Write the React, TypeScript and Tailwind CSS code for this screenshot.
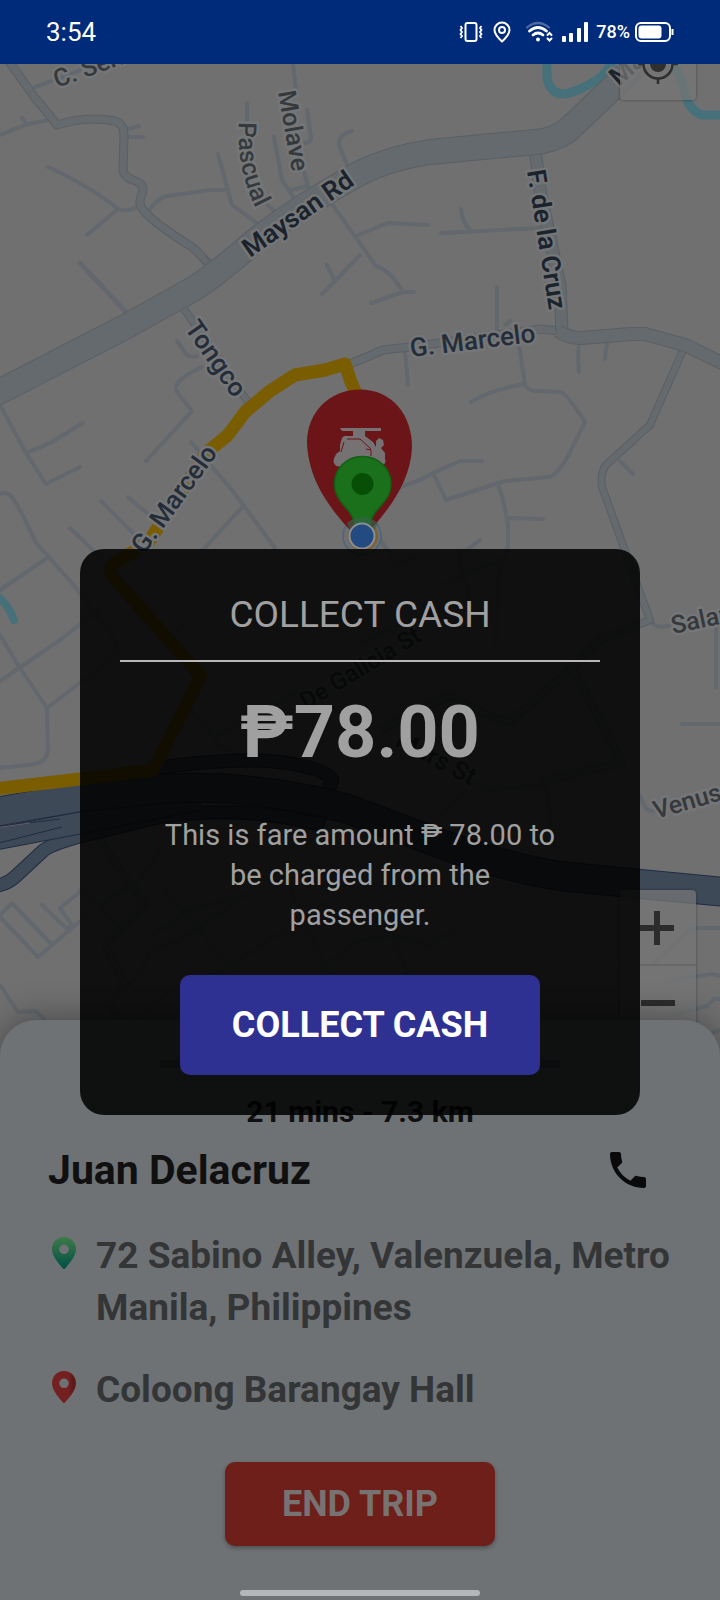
import React from "react";
import { MdPhone } from "react-icons/md";

const streets: string[] = [
  "M0 135L28 124L50 120M22 118L27 125",
  "M35 87L52 81L80 70",
  "M128 129L139 126M128 137H143",
  "M48 167Q90 186 118 209Q127 213 138 206M118 209L87 235",
  "M148 212Q158 197 168 196L210 190H224",
  "M218 154L232 205L257 223M247 103V121M266 203L276 213",
  "M274 137L282 180L294 198M290 190L308 186L303 168",
  "M293 64L296 90M307 110L311 138Q311 142 305 143",
  "M352 131Q338 135 339 145L347 165",
  "M332 204L376 266Q390 270 403 292M371 303L403 292H414",
  "M322 294L335 281L360 255M327 265L335 281M356 236L388 223L428 225",
  "M441 233L540 228M461 209Q462 222 470 230",
  "M177 341L186 354Q190 358 197 356M202 367Q170 382 177 392L192 411L146 461",
  "M0 405L26 453L46 484L80 467M26 453L50 443L83 423",
  "M191 442L232 490L275 548M244 505L200 553",
  "M128 497L155 520M101 501L140 540M70 528L100 557",
  "M0 494Q8 490 14 500Q22 512 36 543L72 583L115 640Q120 652 115 656L47 708",
  "M0 590L47 558M0 635L18 665L47 708L48 750Q47 762 35 764L0 768M0 681L60 640L107 603",
  "M405 353L408 385M497 287V330M505 325L510 321",
  "M579 342L578 354L579 372M607 343L605 359",
  "M519 345L525 384Q527 391 538 391L561 392Q565 392 585 422L567 458Q555 477 548 477L505 481L446 500L433 473",
  "M471 402Q490 390 525 384M400 487L420 480L433 473L460 461H482",
  "M497 483Q503 495 508 525V545Q506 560 495 565M508 518L543 519M620 461L633 474",
  "M650 620Q655 630 672 625M716 628V687M682 724H720M640 795Q645 813 654 811",
  "M720 928H697Q688 928 683 936L652 965M672 980L712 974L720 976M672 1015L707 1006L714 999H720M714 1032L720 1030",
  "M0 915L12 903L52 945L38 957L0 917M42 905L67 929L72 925L60 908L85 888M52 945L90 913",
  "M0 985L18 1012L36 1011L45 1020M380 540L398 564L420 555",
  "M80 890L100 905L140 880L160 850M100 905L115 925M165 890L230 966L330 900M150 937L190 910L245 895",
  "M230 966L190 985L170 990L140 1018M110 1000L140 975L150 950L180 940L250 892",
  "M290 890L325 965L360 940L395 935L430 946L460 925M325 965L350 1000M390 930L408 975",
  "M440 585L500 560L495 645M360 643L425 615L470 600L460 560M190 710L220 745Q235 758 260 754M218 735L300 690",
  "M175 635L185 620M540 785L490 790L470 780M545 780L555 850M440 817L465 790M480 540L460 555",
];

type LabelProps = { x: number; y: number; r: number; children: string; size?: number; strong?: boolean; minor?: boolean };

function Label({ x, y, r, children, size = 25, strong, minor }: LabelProps) {
  return (
    <text
      transform={`translate(${x} ${y}) rotate(${r})`}
      fontFamily="Roboto, sans-serif"
      fontSize={size}
      fontWeight={strong ? 600 : 500}
      fill={minor ? "#36393c" : strong ? "#1b232d" : "#242d38"}
      stroke="#747678"
      strokeWidth="5"
      strokeLinejoin="round"
      paintOrder="stroke"
    >
      {children}
    </text>
  );
}

function Cased({ d, w, fill = "#646a6e", edge = "#5a5f64" }: { d: string; w: number; fill?: string; edge?: string }) {
  return (
    <g fill="none" strokeLinejoin="round">
      <path d={d} stroke={edge} strokeWidth={w} />
      <path d={d} stroke={fill} strokeWidth={w - 2} />
    </g>
  );
}

function CityMap() {
  return (
    <svg
      className="absolute inset-0 h-full w-full bg-[#707070]"
      viewBox="0 64 720 1536"
      preserveAspectRatio="xMidYMin slice"
      role="img"
      aria-label="Trip route map"
    >
      <g fill="none" stroke="#62686d" strokeWidth="4" strokeLinecap="round" strokeLinejoin="round">
        {streets.map((d) => (
          <path key={d} d={d} />
        ))}
        <path d="M80 263L127 313" strokeWidth="5" />
      </g>
      <g fill="none" stroke="#46707a" strokeWidth="9" strokeLinejoin="round">
        <path d="M547 60V78Q550 93 562 94Q572 94 590 84Q604 78 613 60" />
        <path d="M674 66Q684 82 686 97Q690 111 702 115H722" />
        <path d="M-3 596Q8 604 14 620" strokeLinecap="round" strokeWidth="8" />
      </g>
      <Cased d="M8 60L35 98Q48 113 57 125L72 121Q95 117 115 121Q124 124 124 135L123 170Q124 177 133 180Q146 184 142 194Q137 204 144 211Q155 224 192 247Q203 256 213 270" w={9} />
      <Cased d="M182 306L248 402M203 258L213 270" w={8} />
      <Cased d="M350 364L383 350L410 347L540 329L560 331" w={9} />
      <Cased d="M535 148L540 190L560 285L562 332" w={13} />
      <Cased d="M684 348L650 425L606 465Q600 473 602 487L650 620L600 640L572 668L510 722Q490 718 450 695L380 730M572 668L622 762L540 782" w={8} />
      <Cased d="M558 331Q568 338 582 338L630 334L645 334L685 345L724 364" w={14} />
      <Cased d="M-5 394L125 327L195 288Q214 276 250 245Q290 212 360 173Q390 158 430 152L535 142Q552 141 567 131L625 76L690 10" w={26} />
      <Cased d="M93 830L145 905L105 945L125 985L108 1005L130 1025" w={7} />

      <g>
        <Cased d="M-5 886Q8 884 16 876L44 850Q52 844 85 835L160 817Q240 805 318 824L332 780Q325 768 280 762Q230 757 150 769" w={14} fill="#3e4957" edge="#202c40" />
        <Cased d="M-5 839L85 822L200 799" w={23} fill="#3e4957" edge="#202c40" />
        <Cased d="M-5 812L80 797L160 789Q250 783 345 808L420 836Q500 867 560 876L640 884L725 892" w={30} fill="#3e4957" edge="#202c40" />
        <path d="M-5 827L60 819M-5 844L62 827" stroke="#202c40" fill="none" strokeWidth="1" />
        <path d="M-5 828L30 823" stroke="#625d68" fill="none" strokeWidth="1" />
      </g>

      <path
        d="M358 398L351 382L345 364L325 370L295 375L270 391L245 412L228 435L206 453L148 543L113 564Q108 570 113 577L201 676L153 770L80 779L-5 789"
        fill="none"
        stroke="#7a5d00"
        strokeWidth="13"
        strokeLinejoin="round"
      />

      <Label x={57} y={88} r={-20} minor>C. Serrano</Label>
      <Label x={278} y={92} r={80} minor>Molave</Label>
      <path id="pascual-line" d="M239 122Q236 160 251 198Q256 210 264 222" fill="none" />
      <text fontFamily="Roboto, sans-serif" fontSize="25" fontWeight="500" fill="#36393c" stroke="#747678" strokeWidth="5" paintOrder="stroke">
        <textPath href="#pascual-line">Pascual</textPath>
      </text>
      <Label x={250} y={258} r={-35} size={26} strong>Maysan Rd</Label>
      <Label x={619} y={87} r={-42} size={26} strong>Maysan Rd</Label>
      <Label x={527} y={171} r={81} size={26} strong>F. de la Cruz</Label>
      <Label x={184} y={328} r={55} size={26}>Tongco</Label>
      <Label x={144} y={555} r={-54} size={26}>G. Marcelo</Label>
      <Label x={411} y={357} r={-7} size={26}>G. Marcelo</Label>
      <Label x={673} y={634} r={-12} minor>Salazar</Label>
      <Label x={656} y={819} r={-16} minor>Venus</Label>
      <Label x={306} y={710} r={-31} size={24} minor>De Galicia St</Label>
      <Label x={394} y={745} r={28} minor>Mars St</Label>

      <circle cx="362" cy="536" r="19" fill="#6b7075" stroke="#4f6475" strokeWidth="1.5" />
      <circle cx="363" cy="536" r="15" fill="#80602c" />
      <path d="M360 389.500C392 389.500 412 415 412 447C411 480 390 508 372 528Q360 540 348 528C330 508 308 480 307 442C307 412 330 389.500 360 389.500Z" fill="#6c1518" />
      <g fill="#767172">
        <path d="M340 428H381V431H365V436L373 442L376 447L376 441L379 438L383 440L384 445L381 448L385 453V463H336L334 459L336 454L340 451V445L342 438L344 436H353V431H342Z" />
        <path d="M347 439H360L371 449M344 442L341 452M366 449L371 450V456" fill="none" stroke="#6c1518" strokeWidth="1" />
        <circle cx="339" cy="461" r="5.500" />
        <circle cx="381" cy="461" r="4.500" />
      </g>
      <path d="M362.500 456.500C379 456.500 391 469 391 484C391 495 385 501 378 509Q371 517 370 525H355Q353 516 347 509C340 501 334.500 495 334.500 484C334.500 469 346 456.500 362.500 456.500Z" fill="#1a701b" stroke="#135f15" strokeWidth="1.500" />
      <circle cx="362.500" cy="484" r="11" fill="#074f06" />
      <path d="M347 523Q362 511 378 523L374 531H350Z" fill="#35634d" opacity="0.65" />
      <circle cx="362" cy="536" r="12.500" fill="#244a82" stroke="#8b8e92" strokeWidth="2" />
    </svg>
  );
}

function StatusBar() {
  return (
    <header className="z-20 flex h-16 shrink-0 items-center justify-between bg-[#002a7a] pr-[46px] pl-[46px] text-white">
      <time className="text-[26px] leading-8">3:54</time>
      <div className="flex items-center">
        <svg width="24" height="24" viewBox="0 0 24 24" fill="none" stroke="white" aria-label="Vibrate">
          <rect x="6.500" y="3" width="11" height="18" rx="2" strokeWidth="2" />
          <path d="M1.500 6L3 8L1.500 10L3 12L1.500 14L3 16L1.500 18M22.500 6L21 8L22.500 10L21 12L22.500 14L21 16L22.500 18" strokeWidth="1.800" />
        </svg>
        <svg className="ml-2" width="22" height="24" viewBox="0 0 22 24" fill="none" stroke="white" strokeWidth="2" aria-label="Location">
          <path d="M11 21.500Q3.500 14.500 3.500 10A7.500 7.500 0 0 1 18.500 10Q18.500 14.500 11 21.500Z" />
          <circle cx="11" cy="10" r="3" />
        </svg>
        <svg className="ml-3" width="28" height="24" viewBox="0 0 28 24" fill="none" stroke="white" strokeLinecap="round" aria-label="Wi-Fi">
          <path d="M2 7.500Q13 -1.500 24 7.500" strokeWidth="2.200" opacity="0.300" />
          <path d="M4.500 11Q13 4 21.500 11M8 15Q13 11 18 15" strokeWidth="2.800" />
          <circle cx="13" cy="19.500" r="2" fill="white" stroke="none" />
          <path d="M22.500 15L24.500 13L26.500 15M22.500 18.500L24.500 20.500L26.500 18.500" strokeWidth="2" />
        </svg>
        <svg className="ml-2" width="28" height="24" viewBox="0 0 28 24" fill="white" aria-label="Signal">
          <rect x="1" y="16" width="4" height="6" rx="1" />
          <rect x="8" y="13" width="4" height="9" rx="1" />
          <rect x="16" y="8" width="4" height="14" rx="1" />
          <rect x="23" y="2" width="4" height="20" rx="1" />
        </svg>
        <span className="ml-[7px] text-lg leading-6 font-medium">78%</span>
        <svg className="ml-1" width="40" height="24" viewBox="0 0 40 24" fill="none" aria-label="Battery">
          <rect x="2" y="3" width="34" height="18" rx="5" stroke="white" strokeWidth="2" />
          <rect x="4.500" y="5.500" width="23" height="13" rx="3" fill="white" />
          <path d="M38.500 9V15" stroke="white" strokeWidth="2" />
        </svg>
      </div>
    </header>
  );
}

function MapControls() {
  return (
    <>
      <button
        type="button"
        aria-label="My location"
        className="absolute -top-10 right-6 flex h-[76px] w-[76px] items-center justify-center rounded bg-[#757575]/75 shadow-[0_0_3px_rgba(0,0,0,0.4)]"
      >
        <svg width="44" height="44" viewBox="0 0 44 44" fill="none" stroke="#2f2f2f" strokeWidth="2.500" className="mt-1">
          <circle cx="22" cy="22" r="14.500" />
          <circle cx="22" cy="22" r="8" fill="#2f2f2f" stroke="none" />
          <path d="M22 2V8M22 36V42M2 22H8M36 22H42" />
        </svg>
      </button>
      <div className="absolute right-6 bottom-[558px] w-[76px] divide-y-2 divide-[#686868] rounded bg-[#757575]/75 shadow-[0_0_3px_rgba(0,0,0,0.4)]">
        <button type="button" aria-label="Zoom in" className="flex h-[76px] w-full items-center justify-center">
          <svg width="36" height="36" viewBox="0 0 36 36" stroke="#2c2c2c" strokeWidth="6">
            <path d="M0 19H34M17 2V36" />
          </svg>
        </button>
        <button type="button" aria-label="Zoom out" className="flex h-[76px] w-full items-center justify-center">
          <svg width="36" height="36" viewBox="0 0 36 36" stroke="#2c2c2c" strokeWidth="6">
            <path d="M1 17H35" />
          </svg>
        </button>
      </div>
    </>
  );
}

function Pin({ kind }: { kind: "pickup" | "dropoff" }) {
  return (
    <svg className="mt-1.5 shrink-0" width="32" height="34" viewBox="0 0 32 34" aria-hidden="true">
      <defs>
        <linearGradient id="pickup-fill" x1="0" y1="0" x2="0" y2="1">
          <stop offset="0" stopColor="#3f7a49" />
          <stop offset="1" stopColor="#005044" />
        </linearGradient>
        <linearGradient id="dropoff-fill" x1="0" y1="0" x2="1" y2="0">
          <stop offset="0.700" stopColor="#752020" />
          <stop offset="0.850" stopColor="#5e191b" />
        </linearGradient>
      </defs>
      <path
        fillRule="evenodd"
        fill={`url(#${kind}-fill)`}
        d="M16 1C23 1 28 6.500 28 13C28 20 22 27 17 32.500Q16 33.500 15 32.500C10 27 4 20 4 13C4 6.500 9 1 16 1ZM16 8.500A4.800 4.800 0 1 0 16 18.100A4.800 4.800 0 1 0 16 8.500Z"
      />
    </svg>
  );
}

function TripSheet() {
  return (
    <section className="relative flex flex-col items-center rounded-t-[36px] bg-[#6e7275] px-12 pt-10 pb-1 shadow-[0_0_36px_rgba(0,0,0,0.4)]">
      <div className="h-2 w-[400px] max-w-full rounded bg-[#53565a]" />
      <p className="mt-6 text-[30px] leading-10 font-bold text-[#101010]">21 mins - 7.3 km</p>
      <div className="mt-[14px] flex w-full items-center justify-between">
        <h1 className="text-[41px] leading-[48px] font-bold text-[#101010]">Juan Delacruz</h1>
        <a href="tel:" aria-label="Call Juan Delacruz" className="mr-5 text-[#0a0a0a]">
          <MdPhone size={48} />
        </a>
      </div>
      <ul className="mt-9 flex w-full flex-col gap-[30px] text-[37px] leading-[52px] font-bold text-[#343536]">
        <li className="flex gap-4">
          <Pin kind="pickup" />
          <span className="-mr-6 grow">72 Sabino Alley, Valenzuela, Metro Manila, Philippines</span>
        </li>
        <li className="flex gap-4">
          <Pin kind="dropoff" />
          <span>Coloong Barangay Hall</span>
        </li>
      </ul>
      <button
        type="button"
        className="mt-[46px] h-[84px] w-[270px] rounded-[10px] bg-[#6f1f19] text-4xl leading-10 font-bold text-[#787373] shadow-[0_2px_4px_rgba(0,0,0,0.3)]"
      >
        END TRIP
      </button>
      <div className="mt-11 h-1.5 w-60 rounded-full bg-[#b5b6b8]" />
    </section>
  );
}

function CollectDialog() {
  return (
    <div className="absolute inset-0 z-10 flex items-center justify-center px-6">
      <div
        role="dialog"
        aria-labelledby="collect-title"
        className="flex w-full max-w-[560px] flex-col items-center rounded-3xl bg-black/86 p-10 text-center text-[#a0a0a0]"
      >
        <h2 id="collect-title" className="text-[37px] leading-[52px] font-normal">COLLECT CASH</h2>
        <hr className="mt-[19px] w-full border-t-2 border-[#b8b8b8]" />
        <p className="mt-[27px] text-7xl leading-[88px] font-bold">₱78.00</p>
        <p className="mt-[38px] max-w-[400px] text-[29px] leading-10">
          This is fare amount ₱ 78.00 to be charged from the passenger.
        </p>
        <button
          type="button"
          className="mt-10 h-[100px] w-full max-w-[360px] rounded-[10px] bg-[#2e3191] text-4xl leading-10 font-bold text-white"
        >
          COLLECT CASH
        </button>
      </div>
    </div>
  );
}

export default function App() {
  return (
    <div className="flex min-h-screen flex-col bg-[#707070] font-['Roboto',sans-serif]">
      <StatusBar />
      <main className="relative flex flex-1 flex-col justify-end overflow-hidden">
        <CityMap />
        <MapControls />
        <TripSheet />
        <CollectDialog />
      </main>
    </div>
  );
}
